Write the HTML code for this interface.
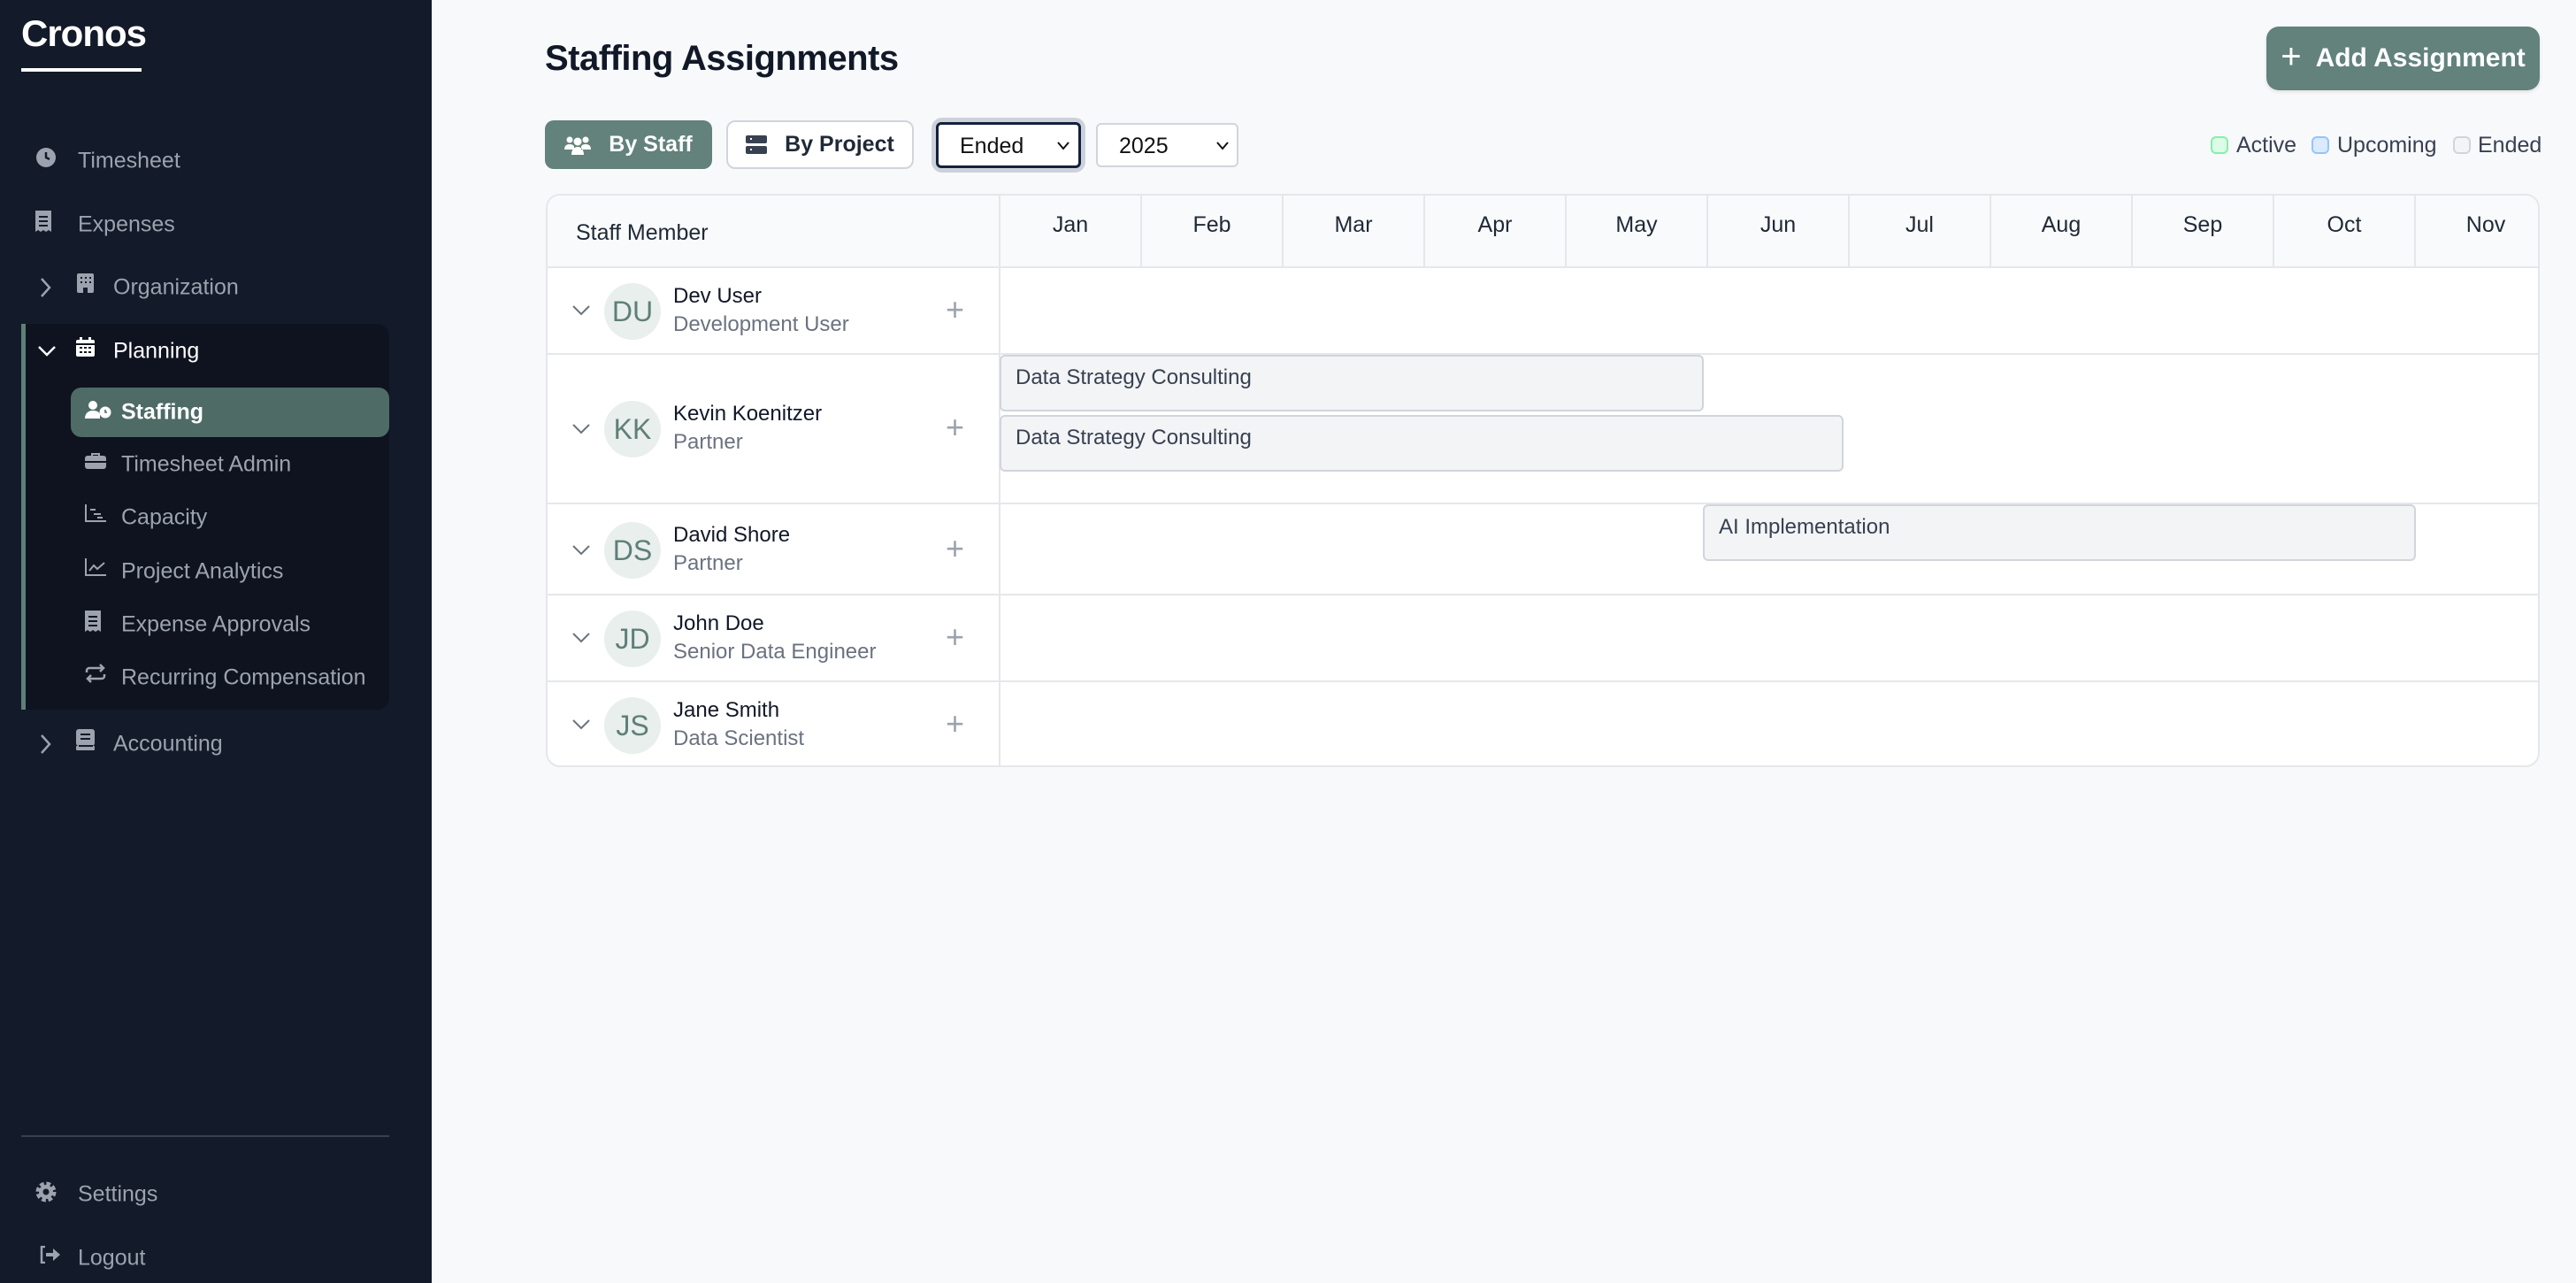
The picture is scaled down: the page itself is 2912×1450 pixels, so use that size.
<!DOCTYPE html>
<html><head><meta charset="utf-8"><style>
*{box-sizing:border-box;margin:0;padding:0}
body{width:2912px;height:1450px;overflow:hidden;background:#f8f9fb;font-family:"Liberation Sans",sans-serif;position:relative}
.abs{position:absolute}
#sb{left:0;top:0;width:488px;height:1450px;background:#131a29}
.logo{left:24px;top:14px;color:#fff;font-size:42px;font-weight:bold;letter-spacing:-1px}
.logoline{left:24px;top:77px;width:136px;height:4px;background:#fff}
.nav{color:#9ca3af;font-size:25px;position:absolute;transform:translateY(-50%)}
.ico{position:absolute;transform:translateY(-50%)}
#plan{left:24px;top:366px;width:416px;height:436px;background:#0e131f;border-left:5px solid #5f7f78;border-radius:0 14px 14px 0}
#staffpill{left:80px;top:438px;width:360px;height:56px;background:#4f6b66;border-radius:12px}
.btn{position:absolute;border-radius:10px;font-size:25px;display:flex;align-items:center;justify-content:center}
.tbl{left:617px;top:219px;width:2254px;height:648px;background:#fff;border:2px solid #e5e7eb;border-radius:16px;overflow:hidden}
.hdr{position:absolute;left:0;top:0;width:100%;height:82px;background:#f9fafb;border-bottom:2px solid #e5e7eb}
.mon{position:absolute;top:0;height:82px;border-left:2px solid #e5e7eb;font-size:25px;color:#1f2937;text-align:center;padding-top:19px;width:160px}
.row{position:absolute;left:0;width:100%;border-bottom:2px solid #e5e7eb}
.av{position:absolute;left:64px;width:64px;height:64px;border-radius:50%;background:#e8efed;color:#5f7f78;font-size:32px;display:flex;align-items:center;justify-content:center}
.nm{position:absolute;left:142px;font-size:24px;color:#111827}
.rl{position:absolute;left:142px;font-size:24px;color:#6b7280}
.bar{position:absolute;background:#f3f4f6;border:2px solid #d1d5db;border-radius:6px;font-size:24px;color:#374151;padding:10px 0 0 16px}
.plus{position:absolute;left:450px;font-size:36px;color:#9ca3af}
</style></head><body>
<div id="sb" class="abs"></div>
<div class="abs logo">Cronos</div>
<div class="abs logoline"></div>

<svg class="ico" style="left:40px;top:178px" width="24" height="24" viewBox="0 0 24 24"><circle cx="12" cy="12" r="11" fill="#9ca3af"/><path d="M12 6v6l4 2" stroke="#131a29" stroke-width="2.5" fill="none"/></svg>
<div class="nav" style="left:88px;top:182px">Timesheet</div>
<svg class="ico" style="left:40px;top:250px" width="18" height="24" viewBox="0 0 18 24"><path d="M0 0h18v24l-3-2-3 2-3-2-3 2-3-2-3 2z" fill="#9ca3af"/><path d="M4 7h10M4 12h10M4 17h10" stroke="#131a29" stroke-width="2"/></svg>
<div class="nav" style="left:88px;top:254px">Expenses</div>
<svg class="ico" style="left:46px;top:325px" width="12" height="22" viewBox="0 0 12 22"><path d="M1 1l9 10-9 10" stroke="#9ca3af" stroke-width="2.5" fill="none"/></svg>
<svg class="ico" style="left:87px;top:320px" width="19" height="22" viewBox="0 0 19 22"><rect width="19" height="22" rx="2" fill="#9ca3af"/><path d="M4 4h2v2H4zM9 4h2v2H9zM14 4h2v2h-2zM4 9h2v2H4zM9 9h2v2H9zM14 9h2v2h-2zM7 16h5v6H7z" fill="#131a29"/></svg>
<div class="nav" style="left:128px;top:325px">Organization</div>

<div id="plan" class="abs"></div>
<svg class="ico" style="left:42px;top:397px" width="22" height="14" viewBox="0 0 22 14"><path d="M2 2l9 9 9-9" stroke="#fff" stroke-width="2.5" fill="none"/></svg>
<svg class="ico" style="left:86px;top:392px" width="21" height="22" viewBox="0 0 21 22"><rect y="3" width="21" height="19" rx="2" fill="#fff"/><rect x="4" width="3" height="5" fill="#fff"/><rect x="14" width="3" height="5" fill="#fff"/><path d="M0 8h21M4 12h3M9 12h3M14 12h3M4 17h3M9 17h3M14 17h3" stroke="#0e131f" stroke-width="2"/></svg>
<div class="nav" style="left:128px;top:397px;color:#fff">Planning</div>
<div id="staffpill" class="abs"></div>
<svg class="ico" style="left:96px;top:463px" width="30" height="20" viewBox="0 0 30 20"><circle cx="9" cy="5" r="5" fill="#fff"/><path d="M0 20c0-6 4-9 9-9s7 2 8 4v5z" fill="#fff"/><circle cx="23" cy="13" r="6.5" fill="#fff"/><path d="M23 10v3h2" stroke="#4f6b66" stroke-width="1.6" fill="none"/></svg>
<div class="nav" style="left:137px;top:466px;color:#fff;font-weight:bold">Staffing</div>
<svg class="ico" style="left:96px;top:521px" width="24" height="18" viewBox="0 0 24 18"><path d="M8 3V1h8v2" stroke="#9ca3af" stroke-width="2" fill="none"/><rect y="3" width="24" height="15" rx="3" fill="#9ca3af"/><path d="M0 10h24" stroke="#0e131f" stroke-width="2"/></svg>
<div class="nav" style="left:137px;top:525px">Timesheet Admin</div>
<svg class="ico" style="left:96px;top:580px" width="24" height="20" viewBox="0 0 24 20"><path d="M1 0v19h23M6 6h6M10 11h8M14 15h6" stroke="#9ca3af" stroke-width="2" fill="none"/></svg>
<div class="nav" style="left:137px;top:585px">Capacity</div>
<svg class="ico" style="left:96px;top:641px" width="24" height="20" viewBox="0 0 24 20"><path d="M1 0v19h23M5 14l5-6 4 4 8-7" stroke="#9ca3af" stroke-width="2" fill="none"/></svg>
<div class="nav" style="left:137px;top:646px">Project Analytics</div>
<svg class="ico" style="left:96px;top:702px" width="18" height="24" viewBox="0 0 18 24"><path d="M0 0h18v24l-3-2-3 2-3-2-3 2-3-2-3 2z" fill="#9ca3af"/><path d="M4 7h10M4 12h10M4 17h10" stroke="#0e131f" stroke-width="2"/></svg>
<div class="nav" style="left:137px;top:706px">Expense Approvals</div>
<svg class="ico" style="left:96px;top:761px" width="24" height="22" viewBox="0 0 24 22"><path d="M2 10V8a3 3 0 013-3h16M17 1l4 4-4 4M22 12v2a3 3 0 01-3 3H3M7 21l-4-4 4-4" stroke="#9ca3af" stroke-width="2.5" fill="none"/></svg>
<div class="nav" style="left:137px;top:766px">Recurring Compensation</div>

<svg class="ico" style="left:46px;top:841px" width="12" height="22" viewBox="0 0 12 22"><path d="M1 1l9 10-9 10" stroke="#9ca3af" stroke-width="2.5" fill="none"/></svg>
<svg class="ico" style="left:86px;top:836px" width="21" height="24" viewBox="0 0 21 24"><rect width="21" height="19" rx="3" fill="#9ca3af"/><rect y="19" width="21" height="5" rx="1" fill="#9ca3af"/><path d="M5 6h11M5 11h11M3 19h16" stroke="#131a29" stroke-width="2"/></svg>
<div class="nav" style="left:128px;top:841px">Accounting</div>

<div class="abs" style="left:24px;top:1283px;width:416px;height:2px;background:#374151"></div>
<svg class="ico" style="left:40px;top:1347px" width="24" height="24" viewBox="0 0 24 24"><circle cx="12" cy="12" r="8" fill="none" stroke="#9ca3af" stroke-width="7" stroke-dasharray="4 2.3"/><circle cx="12" cy="12" r="8" fill="#9ca3af"/><circle cx="12" cy="12" r="3.5" fill="#131a29"/></svg>
<div class="nav" style="left:88px;top:1350px">Settings</div>
<svg class="ico" style="left:44px;top:1418px" width="24" height="20" viewBox="0 0 24 20"><path d="M7 1H3v18h4" stroke="#9ca3af" stroke-width="2.5" fill="none"/><path d="M8 8h8V3l8 7-8 7v-5H8z" fill="#9ca3af"/></svg>
<div class="nav" style="left:88px;top:1422px">Logout</div>

<!-- main -->
<div class="abs" style="left:616px;top:44px;font-size:40px;font-weight:bold;color:#111827;letter-spacing:-0.5px">Staffing Assignments</div>
<div class="btn" style="left:2562px;top:30px;width:309px;height:72px;background:#62827b;color:#fff;font-weight:bold;font-size:30px;border-radius:14px;box-shadow:0 2px 4px rgba(0,0,0,.1)"><span style="font-size:40px;font-weight:normal;margin-right:16px;margin-top:-4px">+</span>Add Assignment</div>

<div class="btn" style="left:616px;top:136px;width:189px;height:55px;background:#62827b;color:#fff;font-weight:bold">
<svg width="30" height="22" viewBox="0 0 30 22" style="margin-right:20px"><circle cx="6" cy="5" r="3.5" fill="#fff"/><circle cx="24" cy="5" r="3.5" fill="#fff"/><circle cx="15" cy="7" r="4.5" fill="#fff"/><path d="M0 16c0-4 2-6 6-6s5 2 5 3v3zM30 16c0-4-2-6-6-6s-5 2-5 3v3zM8 22c0-6 3-9 7-9s7 3 7 9z" fill="#fff"/></svg>By Staff</div>
<div class="btn" style="left:821px;top:136px;width:212px;height:55px;background:#fff;border:2px solid #d1d5db;color:#1f2937;font-weight:bold">
<svg width="24" height="22" viewBox="0 0 24 22" style="margin-right:20px"><rect width="24" height="9" rx="2" fill="#374151"/><rect y="12" width="24" height="9" rx="2" fill="#374151"/><path d="M5 4h2M5 16h2" stroke="#fff" stroke-width="2"/></svg>By Project</div>
<div class="abs" style="left:1053px;top:133px;width:174px;height:62px;border-radius:12px;background:#cdd1da"></div>
<div class="abs" style="left:1058px;top:138px;width:164px;height:52px;border:3px solid #14213d;border-radius:6px;background:#fff;font-size:25px;color:#111;padding:10px 0 0 24px">Ended<svg class="abs" style="left:134px;top:19px" width="14" height="10" viewBox="0 0 14 10"><path d="M1 1l6 7 6-7" stroke="#111" stroke-width="2" fill="none"/></svg></div>
<div class="abs" style="left:1239px;top:139px;width:161px;height:50px;border:2px solid #d1d5db;border-radius:6px;background:#fff;font-size:25px;color:#111;padding:10px 0 0 24px">2025<svg class="abs" style="left:134px;top:19px" width="14" height="10" viewBox="0 0 14 10"><path d="M1 1l6 7 6-7" stroke="#111" stroke-width="2" fill="none"/></svg></div>

<div class="abs" style="left:2499px;top:154px;width:20px;height:20px;border-radius:6px;background:#dcfce7;border:2px solid #86efac"></div>
<div class="abs" style="left:2528px;top:150px;font-size:25px;color:#374151">Active</div>
<div class="abs" style="left:2613px;top:154px;width:20px;height:20px;border-radius:6px;background:#dbeafe;border:2px solid #93c5fd"></div>
<div class="abs" style="left:2642px;top:150px;font-size:25px;color:#374151">Upcoming</div>
<div class="abs" style="left:2773px;top:154px;width:20px;height:20px;border-radius:6px;background:#f3f4f6;border:2px solid #d1d5db"></div>
<div class="abs" style="left:2801px;top:150px;font-size:25px;color:#374151">Ended</div>

<div class="abs tbl">
<div class="hdr"></div>
<div class="abs" style="left:32px;top:28px;font-size:25px;color:#1f2937">Staff Member</div>
<div class="mon" style="left:510px">Jan</div><div class="mon" style="left:670px">Feb</div><div class="mon" style="left:830px">Mar</div><div class="mon" style="left:990px">Apr</div><div class="mon" style="left:1150px">May</div><div class="mon" style="left:1310px">Jun</div><div class="mon" style="left:1470px">Jul</div><div class="mon" style="left:1630px">Aug</div><div class="mon" style="left:1790px">Sep</div><div class="mon" style="left:1950px">Oct</div><div class="mon" style="left:2110px">Nov</div>
<div class="abs" style="left:510px;top:82px;width:2px;height:570px;background:#e5e7eb"></div>

<div class="row" style="top:82px;height:98px">
<svg class="abs" style="left:28px;top:42px" width="20" height="12" viewBox="0 0 20 12"><path d="M1 1l9 9 9-9" stroke="#6b7280" stroke-width="2" fill="none"/></svg>
<div class="av" style="top:17px">DU</div><div class="nm" style="top:18px">Dev User</div><div class="rl" style="top:50px">Development User</div>
<div class="plus" style="top:26px">+</div></div>

<div class="row" style="top:180px;height:169px">
<svg class="abs" style="left:28px;top:78px" width="20" height="12" viewBox="0 0 20 12"><path d="M1 1l9 9 9-9" stroke="#6b7280" stroke-width="2" fill="none"/></svg>
<div class="av" style="top:52px">KK</div><div class="nm" style="top:53px">Kevin Koenitzer</div><div class="rl" style="top:85px">Partner</div>
<div class="plus" style="top:61px">+</div>
<div class="bar" style="left:511px;top:0;width:796px;height:64px">Data Strategy Consulting</div>
<div class="bar" style="left:511px;top:68px;width:954px;height:64px">Data Strategy Consulting</div></div>

<div class="row" style="top:349px;height:103px">
<svg class="abs" style="left:28px;top:46px" width="20" height="12" viewBox="0 0 20 12"><path d="M1 1l9 9 9-9" stroke="#6b7280" stroke-width="2" fill="none"/></svg>
<div class="av" style="top:20px">DS</div><div class="nm" style="top:21px">David Shore</div><div class="rl" style="top:53px">Partner</div>
<div class="plus" style="top:29px">+</div>
<div class="bar" style="left:1306px;top:0;width:806px;height:64px">AI Implementation</div></div>

<div class="row" style="top:452px;height:98px">
<svg class="abs" style="left:28px;top:42px" width="20" height="12" viewBox="0 0 20 12"><path d="M1 1l9 9 9-9" stroke="#6b7280" stroke-width="2" fill="none"/></svg>
<div class="av" style="top:17px">JD</div><div class="nm" style="top:18px">John Doe</div><div class="rl" style="top:50px">Senior Data Engineer</div>
<div class="plus" style="top:26px">+</div></div>

<div class="row" style="top:550px;height:98px;border-bottom:none">
<svg class="abs" style="left:28px;top:42px" width="20" height="12" viewBox="0 0 20 12"><path d="M1 1l9 9 9-9" stroke="#6b7280" stroke-width="2" fill="none"/></svg>
<div class="av" style="top:17px">JS</div><div class="nm" style="top:18px">Jane Smith</div><div class="rl" style="top:50px">Data Scientist</div>
<div class="plus" style="top:26px">+</div></div>
</div>
</body></html>
